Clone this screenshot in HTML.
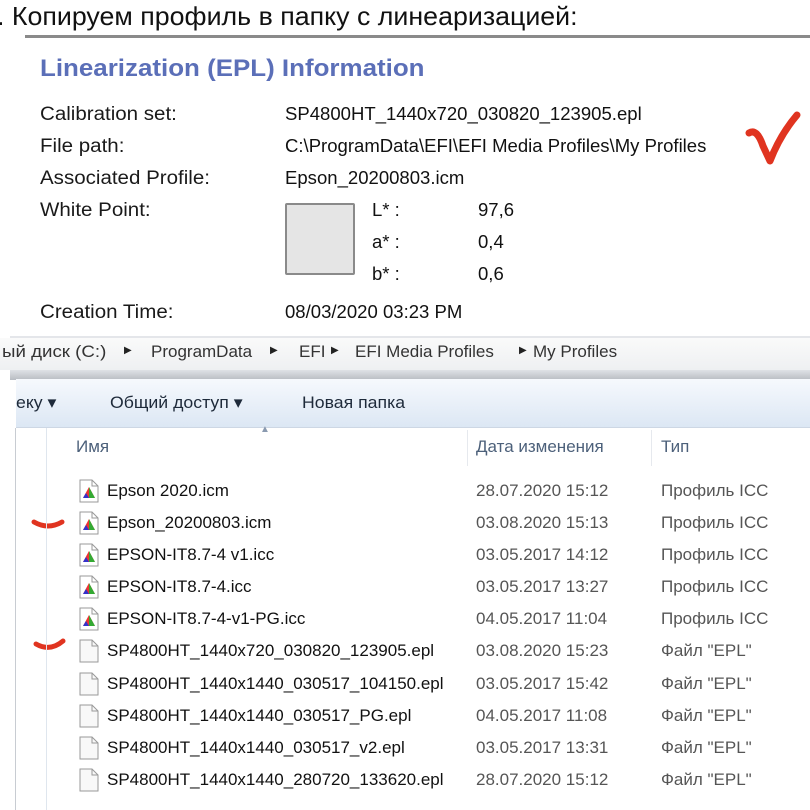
<!DOCTYPE html>
<html><head><meta charset="utf-8"><style>
*{margin:0;padding:0;box-sizing:border-box}
body{width:810px;height:810px;background:#fff;position:relative;overflow:hidden;font-family:"Liberation Sans","DejaVu Sans",sans-serif}
.a{position:absolute;white-space:nowrap}
.h{font-size:26px;color:#111;top:1px;left:-3px;transform:scaleX(1.03);transform-origin:left}
.lab{font-size:19px;color:#1a1a1a;transform:scaleX(1.08);transform-origin:left}
.val{font-size:18px;color:#111;transform:scaleX(1.03);transform-origin:left}
.bc{position:absolute;top:340px;font-size:17px;color:#333;line-height:24px}
.ar{position:absolute;top:345px;font-size:10px;color:#222}
.tb{position:absolute;top:391px;font-size:17px;color:#1e2a3a;line-height:24px;transform:scaleX(1.04);transform-origin:left}
.row{position:absolute;left:0;width:810px;height:32px;font-size:17px;line-height:32px}
.row .n{position:absolute;left:107px;color:#111}
.row .d{position:absolute;left:476px;color:#555}
.row .t{position:absolute;left:661px;color:#555}
.row svg{position:absolute;left:79px;top:4px}
</style></head><body>
<div class="a h">. Копируем профиль в папку с линеаризацией:</div>
<div class="a" style="left:25px;top:35px;width:785px;height:3px;background:#8a8a8a"></div>
<div class="a" style="left:40px;top:55px;font-size:24px;font-weight:bold;color:#5b6fb8;transform:scaleX(1.08);transform-origin:left">Linearization (EPL) Information</div>
<div class="a lab" style="left:40px;top:104px">Calibration set:</div>
<div class="a lab" style="left:40px;top:136px">File path:</div>
<div class="a lab" style="left:40px;top:168px">Associated Profile:</div>
<div class="a lab" style="left:40px;top:200px">White Point:</div>
<div class="a lab" style="left:40px;top:302px">Creation Time:</div>
<div class="a val" style="left:285px;top:104px">SP4800HT_1440x720_030820_123905.epl</div>
<div class="a val" style="left:285px;top:136px">C:\ProgramData\EFI\EFI Media Profiles\My Profiles</div>
<div class="a val" style="left:285px;top:168px">Epson_20200803.icm</div>
<div class="a val" style="left:285px;top:302px">08/03/2020 03:23 PM</div>
<div class="a" style="left:285px;top:203px;width:70px;height:72px;background:#e5e5e5;border:2px solid #8a8a8a;border-radius:2px"></div>
<div class="a val" style="left:372px;top:200px">L* :</div>
<div class="a val" style="left:372px;top:232px">a* :</div>
<div class="a val" style="left:372px;top:264px">b* :</div>
<div class="a val" style="left:478px;top:200px">97,6</div>
<div class="a val" style="left:478px;top:232px">0,4</div>
<div class="a val" style="left:478px;top:264px">0,6</div>
<svg class="a" style="left:0;top:0" width="810" height="810">
<path d="M749 133 Q757 128 763 146 L770 161 Q780 135 797 115" stroke="#e03420" stroke-width="7" fill="none" stroke-linecap="round" stroke-linejoin="round"/>
<path d="M34 522 Q48 530 62 522" stroke="#e03420" stroke-width="5" fill="none" stroke-linecap="round"/>
<path d="M36 644 Q50 652 63 641" stroke="#e03420" stroke-width="5" fill="none" stroke-linecap="round"/>
</svg>
<div class="a" style="left:10px;top:336px;width:800px;height:2px;background:#e4e6ea"></div>
<div class="a" style="left:0;top:338px;width:810px;height:32px;background:linear-gradient(#fafafa,#eef0f2)"></div>
<div class="bc" style="left:2px;transform:scaleX(1.1);transform-origin:left">ый диск (C:)</div>
<div class="ar" style="left:124px">▶</div>
<div class="bc" style="left:151px">ProgramData</div>
<div class="ar" style="left:270px">▶</div>
<div class="bc" style="left:299px">EFI</div>
<div class="ar" style="left:331px">▶</div>
<div class="bc" style="left:355px">EFI Media Profiles</div>
<div class="ar" style="left:519px">▶</div>
<div class="bc" style="left:533px">My Profiles</div>
<div class="a" style="left:10px;top:370px;width:800px;height:10px;background:linear-gradient(#dfe2e6,#b8bcc2)"></div>
<div class="a" style="left:16px;top:379px;width:794px;height:49px;background:linear-gradient(#f6f9fd,#dce7f4);border-bottom:1px solid #cdd7e4"></div>
<div class="tb" style="left:16px">еку ▾</div>
<div class="tb" style="left:110px">Общий доступ ▾</div>
<div class="tb" style="left:302px">Новая папка</div>
<div class="a" style="left:15px;top:428px;width:1px;height:382px;background:#c8ccd2"></div>
<div class="a" style="left:46px;top:428px;width:1px;height:382px;background:#dfe6ee"></div>
<div class="a" style="left:467px;top:430px;width:1px;height:36px;background:#e6e9ee"></div>
<div class="a" style="left:651px;top:430px;width:1px;height:36px;background:#e6e9ee"></div>
<div class="a" style="left:76px;top:436px;font-size:17px;color:#4c607a;line-height:22px">Имя</div>
<div class="a" style="left:260px;top:424px;font-size:10px;color:#8a9ab0">▲</div>
<div class="a" style="left:476px;top:436px;font-size:17px;color:#4c607a;line-height:22px">Дата изменения</div>
<div class="a" style="left:661px;top:436px;font-size:17px;color:#4c607a;line-height:22px">Тип</div>

<div class="row" style="top:475px"><svg width="20" height="24"><path d="M1 1H13L19 7V23H1Z" fill="#fff" stroke="#999"/><path d="M13 1V7H19" fill="none" stroke="#999"/><path d="M10 8L16 19H4Z" fill="#e33"/><path d="M10 8L16 19H10Z" fill="#3a3"/><path d="M7 14L10 19H4Z" fill="#33c"/></svg><span class="n">Epson 2020.icm</span><span class="d">28.07.2020 15:12</span><span class="t">Профиль ICC</span></div>
<div class="row" style="top:507px"><svg width="20" height="24"><path d="M1 1H13L19 7V23H1Z" fill="#fff" stroke="#999"/><path d="M13 1V7H19" fill="none" stroke="#999"/><path d="M10 8L16 19H4Z" fill="#e33"/><path d="M10 8L16 19H10Z" fill="#3a3"/><path d="M7 14L10 19H4Z" fill="#33c"/></svg><span class="n">Epson_20200803.icm</span><span class="d">03.08.2020 15:13</span><span class="t">Профиль ICC</span></div>
<div class="row" style="top:539px"><svg width="20" height="24"><path d="M1 1H13L19 7V23H1Z" fill="#fff" stroke="#999"/><path d="M13 1V7H19" fill="none" stroke="#999"/><path d="M10 8L16 19H4Z" fill="#e33"/><path d="M10 8L16 19H10Z" fill="#3a3"/><path d="M7 14L10 19H4Z" fill="#33c"/></svg><span class="n">EPSON-IT8.7-4 v1.icc</span><span class="d">03.05.2017 14:12</span><span class="t">Профиль ICC</span></div>
<div class="row" style="top:571px"><svg width="20" height="24"><path d="M1 1H13L19 7V23H1Z" fill="#fff" stroke="#999"/><path d="M13 1V7H19" fill="none" stroke="#999"/><path d="M10 8L16 19H4Z" fill="#e33"/><path d="M10 8L16 19H10Z" fill="#3a3"/><path d="M7 14L10 19H4Z" fill="#33c"/></svg><span class="n">EPSON-IT8.7-4.icc</span><span class="d">03.05.2017 13:27</span><span class="t">Профиль ICC</span></div>
<div class="row" style="top:603px"><svg width="20" height="24"><path d="M1 1H13L19 7V23H1Z" fill="#fff" stroke="#999"/><path d="M13 1V7H19" fill="none" stroke="#999"/><path d="M10 8L16 19H4Z" fill="#e33"/><path d="M10 8L16 19H10Z" fill="#3a3"/><path d="M7 14L10 19H4Z" fill="#33c"/></svg><span class="n">EPSON-IT8.7-4-v1-PG.icc</span><span class="d">04.05.2017 11:04</span><span class="t">Профиль ICC</span></div>
<div class="row" style="top:635px"><svg width="20" height="24"><path d="M1 1H13L19 7V23H1Z" fill="#f8f8f8" stroke="#999"/><path d="M13 1V7H19" fill="none" stroke="#999"/></svg><span class="n">SP4800HT_1440x720_030820_123905.epl</span><span class="d">03.08.2020 15:23</span><span class="t">Файл "EPL"</span></div>
<div class="row" style="top:668px"><svg width="20" height="24"><path d="M1 1H13L19 7V23H1Z" fill="#f8f8f8" stroke="#999"/><path d="M13 1V7H19" fill="none" stroke="#999"/></svg><span class="n">SP4800HT_1440x1440_030517_104150.epl</span><span class="d">03.05.2017 15:42</span><span class="t">Файл "EPL"</span></div>
<div class="row" style="top:700px"><svg width="20" height="24"><path d="M1 1H13L19 7V23H1Z" fill="#f8f8f8" stroke="#999"/><path d="M13 1V7H19" fill="none" stroke="#999"/></svg><span class="n">SP4800HT_1440x1440_030517_PG.epl</span><span class="d">04.05.2017 11:08</span><span class="t">Файл "EPL"</span></div>
<div class="row" style="top:732px"><svg width="20" height="24"><path d="M1 1H13L19 7V23H1Z" fill="#f8f8f8" stroke="#999"/><path d="M13 1V7H19" fill="none" stroke="#999"/></svg><span class="n">SP4800HT_1440x1440_030517_v2.epl</span><span class="d">03.05.2017 13:31</span><span class="t">Файл "EPL"</span></div>
<div class="row" style="top:764px"><svg width="20" height="24"><path d="M1 1H13L19 7V23H1Z" fill="#f8f8f8" stroke="#999"/><path d="M13 1V7H19" fill="none" stroke="#999"/></svg><span class="n">SP4800HT_1440x1440_280720_133620.epl</span><span class="d">28.07.2020 15:12</span><span class="t">Файл "EPL"</span></div>
</body></html>
